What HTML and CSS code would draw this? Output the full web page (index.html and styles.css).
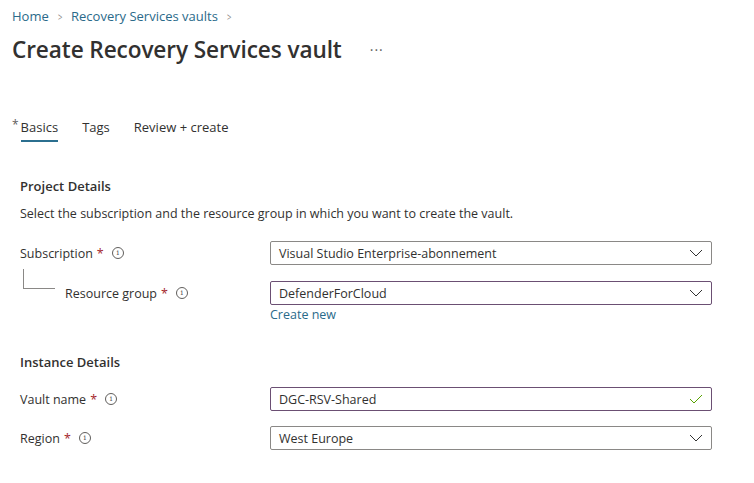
FILE: index.html
```html
<!DOCTYPE html>
<html>
<head>
<meta charset="utf-8">
<link rel="stylesheet" href="styles.css">
</head>
<body>
<div class="page">
  <nav class="crumbs">
    <a class="crumb">Home</a><span class="sep">&gt;</span><a class="crumb">Recovery Services vaults</a><span class="sep">&gt;</span>
  </nav>
  <div class="titlebar">
    <h1 class="title">Create Recovery Services vault</h1>
    <span class="more">···</span>
  </div>
  <div class="tabs">
    <div class="tab active"><span class="req-mark">*</span><span class="tab-text">Basics</span></div>
    <div class="tab"><span class="tab-text">Tags</span></div>
    <div class="tab"><span class="tab-text">Review + create</span></div>
  </div>
  <section class="form">
    <h2 class="section-title">Project Details</h2>
    <p class="desc">Select the subscription and the resource group in which you want to create the vault.</p>
    <div class="row">
      <div class="label">Subscription <span class="star">*</span> <span class="info">i</span></div>
      <div class="field">
        <div class="select"><span>Visual Studio Enterprise-abonnement</span>
          <svg class="chev" width="14" height="8" viewBox="0 0 14 8"><path d="M1 1l6 6 6-6" fill="none" stroke="#333" stroke-width="1"/></svg>
        </div>
      </div>
    </div>
    <div class="row sub">
      <div class="label child"><span class="tree"></span>Resource group <span class="star">*</span> <span class="info">i</span></div>
      <div class="field">
        <div class="select focus"><span>DefenderForCloud</span>
          <svg class="chev" width="14" height="8" viewBox="0 0 14 8"><path d="M1 1l6 6 6-6" fill="none" stroke="#333" stroke-width="1"/></svg>
        </div>
        <a class="link">Create new</a>
      </div>
    </div>
    <h2 class="section-title second">Instance Details</h2>
    <div class="row first-inst">
      <div class="label">Vault name <span class="star">*</span> <span class="info">i</span></div>
      <div class="field">
        <div class="select focus"><span>DGC-RSV-Shared</span>
          <svg class="chev" width="14" height="10" viewBox="0 0 14 10"><path d="M1 5l4 4 8-8" fill="none" stroke="#57a300" stroke-width="1"/></svg>
        </div>
      </div>
    </div>
    <div class="row last">
      <div class="label">Region <span class="star">*</span> <span class="info">i</span></div>
      <div class="field">
        <div class="select"><span>West Europe</span>
          <svg class="chev" width="14" height="8" viewBox="0 0 14 8"><path d="M1 1l6 6 6-6" fill="none" stroke="#333" stroke-width="1"/></svg>
        </div>
      </div>
    </div>
  </section>
</div>
</body>
</html>
```
FILE: styles.css
```css
* { box-sizing: border-box; }
html, body { margin: 0; background: #fff; }
body {
  font-family: "Open Sans", "Noto Sans", sans-serif;
  font-size: 12.5px;
  color: #323130;
}
.page { padding: 6px 0 0 12px; }
.crumbs { display: flex; align-items: center; height: 20px; font-size: 13px; }
.crumb { color: #2a6a8a; }
.sep { color: #8a8886; margin: 0 8px; font-size: 11px; transform: scaleX(0.7); display: inline-block; }
.titlebar { display: flex; align-items: center; margin-top: 6px; height: 34px; }
.title { font-size: 22.6px; font-weight: 600; margin: 0; color: #323130; letter-spacing: -0.1px; }
.more { margin-left: 28px; color: #605e5c; font-size: 14px; letter-spacing: 1px; }
.tabs { display: flex; margin-top: 48px; height: 36px; }
.tab { position: relative; display: flex; align-items: flex-start; margin-right: 24px; padding-top: 4px; font-size: 13px; }
.tab .req-mark { color: #605e5c; font-size: 12px; margin-right: 2px; margin-top: -2px; }
.tab.active .tab-text { border-bottom: 2px solid #2b6f8f; padding-bottom: 4px; }
.form { padding-left: 8px; margin-top: 24px; }
.section-title { font-size: 13px; font-weight: 600; margin: 0; height: 24px; line-height: 24px; }
.section-title.second { margin-top: 27px; }
.desc { margin: 6px 0 0; line-height: 20px; }
.row { display: flex; align-items: flex-start; margin-top: 17px; }
.row.sub { margin-top: 16px; }
.row.first-inst { margin-top: 13px; }
.row.last { margin-top: 15px; }
.label { width: 250px; height: 24px; display: flex; align-items: center; }
.label .star { color: #a4262c; margin: 0 8px 0 4px; }
.info { width: 12px; height: 12px; border: 1px solid #605e5c; border-radius: 50%; font-size: 8px; line-height: 10px; text-align: center; color: #605e5c; font-family: "DejaVu Serif", serif; }
.label.child { position: relative; padding-left: 45px; }
.tree { position: absolute; left: 3px; top: -12px; width: 32px; height: 20px; border-left: 1px solid #8a8886; border-bottom: 1px solid #8a8886; }
.field { width: 442px; }
.select { height: 24px; border: 1px solid #8a8886; border-radius: 2px; display: flex; align-items: center; justify-content: space-between; padding: 0 8px 0 8px; }
.select.focus { border-color: #6b4f73; }
.chev { margin-right: 0; }
.link { display: block; color: #2a6a8a; margin-top: 1px; line-height: 17px; }
```
